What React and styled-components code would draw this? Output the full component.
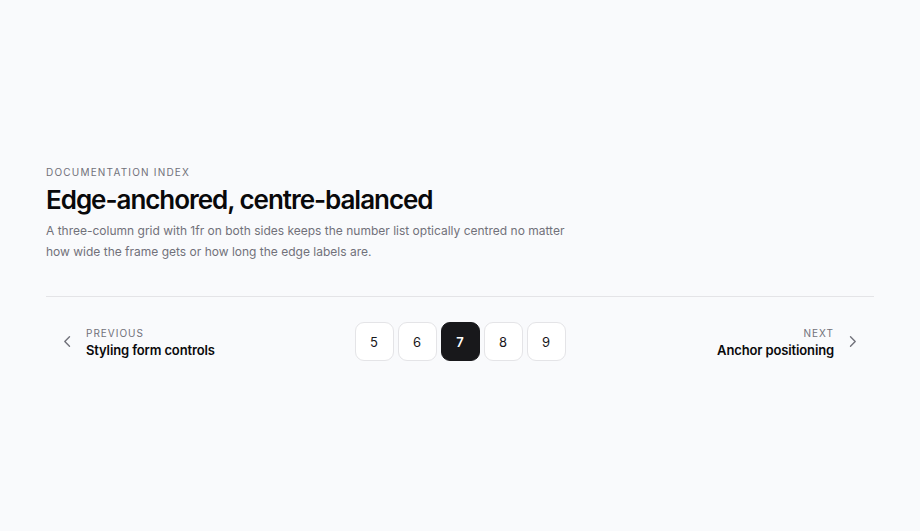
import styled, { createGlobalStyle } from "styled-components";

const GlobalStyle = createGlobalStyle`
	* {
		box-sizing: border-box;
	}
	body {
		margin: 0;
		background-color: #f9fafc;
		color: #09090b;
		font-family: "Inter", sans-serif;
		-webkit-font-smoothing: antialiased;
	}
`;

const Page = styled.main`
	min-height: 100vh;
	padding: 24px 5% 30px;
	display: flex;
	flex-direction: column;
	justify-content: center;
`;
const Header = styled.header`
	padding-bottom: 34px;
	border-bottom: 1px solid #e4e4e7;
`;
const Eyebrow = styled.p`
	margin: 0;
	font-size: 10px;
	line-height: 16px;
	letter-spacing: 0.12em;
	text-transform: uppercase;
	color: #71717a;
`;
const Title = styled.h1`
	margin: 4px 0;
	font-size: 26px;
	font-weight: 600;
	line-height: 32px;
	letter-spacing: -0.04em;
`;
const Intro = styled.p`
	max-width: 540px;
	margin: 0;
	font-size: 12px;
	line-height: 21px;
	color: #71717a;
`;
const Pagination = styled.nav`
	display: grid;
	grid-template-columns: 1fr auto 1fr;
	align-items: center;
	padding-top: 25px;
`;
const EdgeLink = styled.a`
	display: flex;
	align-items: center;
	gap: 12px;
	padding: 0 15px;
	justify-self: ${(props) => (props.$end ? "end" : "start")};
	text-align: ${(props) => (props.$end ? "right" : "left")};
	color: inherit;
	text-decoration: none;
`;
const EdgeText = styled.span`
	display: flex;
	flex-direction: column;
`;
const EdgeLabel = styled.span`
	font-size: 10px;
	line-height: 16px;
	letter-spacing: 0.1em;
	text-transform: uppercase;
	color: #71717a;
`;
const EdgeTitle = styled.span`
	font-size: 13px;
	font-weight: 600;
	line-height: 18px;
	letter-spacing: -0.01em;
`;
const Chevron = styled.svg`
	width: 13px;
	height: 13px;
	fill: none;
	stroke: #71717a;
	stroke-width: 1.4;
	stroke-linecap: round;
	stroke-linejoin: round;
`;
const Pages = styled.ol`
	display: flex;
	gap: 4px;
	margin: 0;
	padding: 0;
	list-style: none;
`;
const PageLink = styled.a`
	display: flex;
	align-items: center;
	justify-content: center;
	width: 39px;
	height: 39px;
	border: 1px solid ${(props) => (props.$active ? "#18181b" : "#e4e4e7")};
	border-radius: 9px;
	background-color: ${(props) => (props.$active ? "#18181b" : "#fff")};
	color: ${(props) => (props.$active ? "#fff" : "#18181b")};
	font-size: 13px;
	font-weight: ${(props) => (props.$active ? 600 : 400)};
	text-decoration: none;
`;

const pages = [5, 6, 7, 8, 9];
const current = 7;

export default function App() {
	return (
		<Page>
			<GlobalStyle />
			<Header>
				<Eyebrow>Documentation index</Eyebrow>
				<Title>Edge-anchored, centre-balanced</Title>
				<Intro>
					A three-column grid with 1fr on both sides keeps the number
					list optically centred no matter how wide the frame gets or
					how long the edge labels are.
				</Intro>
			</Header>
			<Pagination aria-label="Pagination">
				<EdgeLink href="#6" rel="prev">
					<Chevron viewBox="0 0 13 13" aria-hidden="true">
						<path d="M8.5 1.8 3.8 6.5l4.7 4.7" />
					</Chevron>
					<EdgeText>
						<EdgeLabel>Previous</EdgeLabel>
						<EdgeTitle>Styling form controls</EdgeTitle>
					</EdgeText>
				</EdgeLink>
				<Pages>
					{pages.map((page) => (
						<li key={page}>
							<PageLink
								href={`#${page}`}
								$active={page === current}
								aria-current={page === current ? "page" : undefined}
							>
								{page}
							</PageLink>
						</li>
					))}
				</Pages>
				<EdgeLink href="#8" rel="next" $end>
					<EdgeText>
						<EdgeLabel>Next</EdgeLabel>
						<EdgeTitle>Anchor positioning</EdgeTitle>
					</EdgeText>
					<Chevron viewBox="0 0 13 13" aria-hidden="true">
						<path d="M4.5 1.8 9.2 6.5l-4.7 4.7" />
					</Chevron>
				</EdgeLink>
			</Pagination>
		</Page>
	);
}
